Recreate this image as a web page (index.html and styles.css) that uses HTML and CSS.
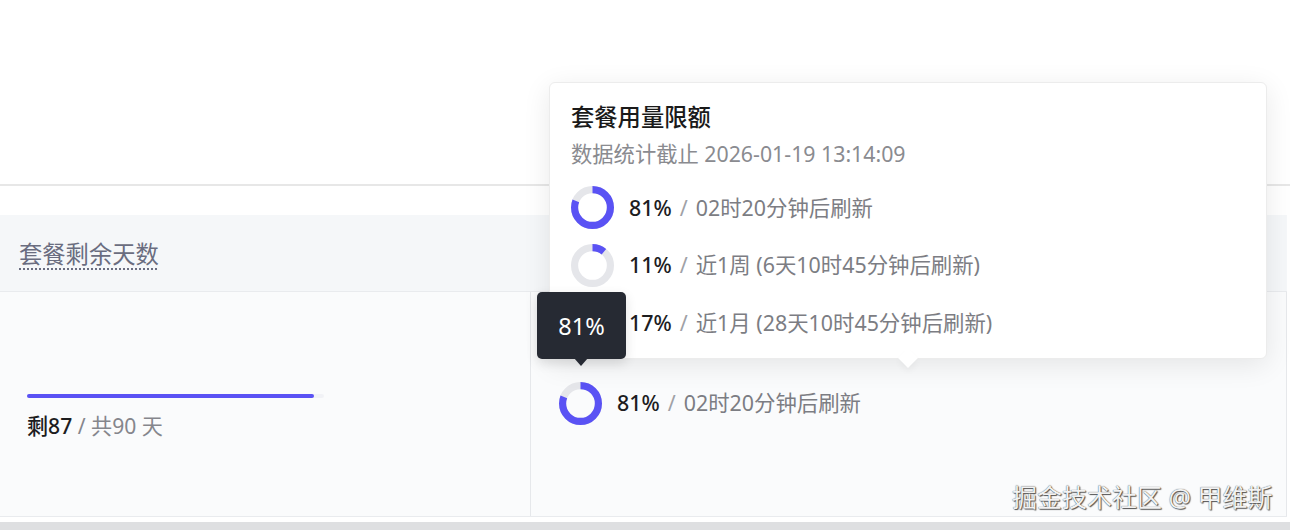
FILE: index.html
```html
<!DOCTYPE html>
<html lang="zh-CN">
<head>
<meta charset="utf-8">
<title>套餐用量</title>
<link rel="stylesheet" href="styles.css">
</head>
<body>
<div class="page">
  <div class="topbar"></div>
  <div class="spacer"></div>
  <div class="table">
    <div class="thead">
      <span class="th-label">套餐剩余天数</span>
    </div>
    <div class="tbody">
      <div class="cell cell-days">
        <div class="bar"><div class="bar-fill" style="width:96.7%"></div></div>
        <div class="days"><span class="strong">剩87</span><span class="muted"> / 共90 天</span></div>
      </div>
      <div class="cell cell-usage">
        <div class="usage-row">
          <svg class="ring" viewBox="0 0 42 42"><circle class="ring-track" cx="21" cy="21" r="17.5"/><circle class="ring-fill" cx="21" cy="21" r="17.5" pathLength="100" stroke-dasharray="81 100"/></svg>
          <span class="pct">81%</span><span class="sep">/</span><span class="desc">02时20分钟后刷新</span>
        </div>
      </div>
    </div>
  </div>
  <div class="strip-white"></div>
  <div class="strip-gray"></div>

  <div class="popover">
    <div class="pop-title">套餐用量限额</div>
    <div class="pop-sub">数据统计截止 2026-01-19 13:14:09</div>
    <div class="pop-rows">
      <div class="usage-row">
        <svg class="ring" viewBox="0 0 42 42"><circle class="ring-track" cx="21" cy="21" r="17.5"/><circle class="ring-fill" cx="21" cy="21" r="17.5" pathLength="100" stroke-dasharray="81 100"/></svg>
        <span class="pct">81%</span><span class="sep">/</span><span class="desc">02时20分钟后刷新</span>
      </div>
      <div class="usage-row">
        <svg class="ring" viewBox="0 0 42 42"><circle class="ring-track" cx="21" cy="21" r="17.5"/><circle class="ring-fill" cx="21" cy="21" r="17.5" pathLength="100" stroke-dasharray="11 100"/></svg>
        <span class="pct">11%</span><span class="sep">/</span><span class="desc">近1周 (6天10时45分钟后刷新)</span>
      </div>
      <div class="usage-row">
        <svg class="ring" viewBox="0 0 42 42"><circle class="ring-track" cx="21" cy="21" r="17.5"/><circle class="ring-fill" cx="21" cy="21" r="17.5" pathLength="100" stroke-dasharray="17 100"/></svg>
        <span class="pct">17%</span><span class="sep">/</span><span class="desc">近1月 (28天10时45分钟后刷新)</span>
      </div>
    </div>
    <div class="pop-arrow"></div>
  </div>

  <div class="tooltip">81%<div class="tip-arrow"></div></div>

  <div class="watermark">掘金技术社区 @ 甲维斯</div>
</div>
</body>
</html>
```
FILE: styles.css
```css
* { box-sizing: border-box; }
html, body { margin: 0; padding: 0; background: #ffffff; }
body {
  font-family: "Noto Sans", "Noto Sans CJK SC", sans-serif;
  width: 1290px;
  height: 530px;
  overflow: hidden;
}
.page { position: relative; width: 1290px; height: 530px; }

.topbar { height: 186px; border-bottom: 2px solid #e7e7e7; }
.spacer { height: 29px; }

.table { width: 1287px; }
.thead {
  height: 77px;
  background: #f5f7f9;
  border-bottom: 1px solid #e9ebee;
  display: flex;
  align-items: center;
  padding-left: 19px;
  padding-top: 2px;
}
.th-label {
  font-size: 23.3px;
  color: #6a6d80;
  line-height: 30px;
  text-decoration: underline dotted #6a6d80;
  text-underline-offset: 5px;
  text-decoration-thickness: 1.5px;
}
.tbody {
  height: 225px;
  display: grid;
  grid-template-columns: 531px 1fr;
  background: #fafbfc;
  border-bottom: 1px solid #e9ebee;
}
.cell { height: 100%; }
.cell-days {
  border-right: 1px solid #e6e8eb;
  padding: 102px 0 0 27px;
}
.bar {
  width: 297px;
  height: 4px;
  background: #f1f2f6;
  border-radius: 2px;
}
.bar-fill { height: 100%; background: #5a52f4; border-radius: 2px; }
.days { margin-top: 13px; font-size: 21.1px; line-height: 30px; }
.strong { color: #1d1d1f; font-weight: 500; }
.muted { color: #85868c; }

.cell-usage {
  border-right: 1px solid #e6e8eb;
  display: flex;
  align-items: center;
  padding-left: 28px;
  padding-bottom: 2px;
}

.usage-row {
  display: flex;
  align-items: center;
  font-size: 21.4px;
  line-height: 30px;
}
.ring { width: 43px; height: 43px; transform: rotate(-90deg); margin-right: 15px; flex: none; }
.ring-track { fill: none; stroke: #e5e6ea; stroke-width: 7; }
.ring-fill { fill: none; stroke: #5a52f4; stroke-width: 7; }
.pct { color: #1d1d1f; font-weight: 500; }
.sep { color: #a0a1a6; margin: 0 8px 0 8px; }
.desc { color: #7c7d83; }

.strip-white { height: 5px; }
.strip-gray { height: 8px; background: #dedfe1; }

.popover {
  position: absolute;
  left: 549px;
  top: 82px;
  width: 718px;
  height: 277px;
  background: #ffffff;
  border-radius: 6px;
  border: 1px solid #ececec;
  box-shadow: 0 6px 28px rgba(0, 0, 0, 0.09);
  padding: 19px 0 0 21px;
}
.pop-title { font-size: 23.3px; font-weight: 500; color: #1a1a1a; line-height: 30px; }
.pop-sub { margin-top: 7px; font-size: 21.3px; color: #8a8b90; line-height: 30px; }
.pop-rows { margin-top: 17px; display: flex; flex-direction: column; gap: 14.5px; }
.pop-arrow {
  position: absolute;
  left: 351px;
  bottom: -7px;
  width: 14px;
  height: 14px;
  background: #ffffff;
  transform: rotate(45deg);
  box-shadow: 3px 3px 6px rgba(0, 0, 0, 0.04);
}

.tooltip {
  position: absolute;
  left: 537px;
  top: 292px;
  width: 89px;
  height: 67px;
  background: #262a33;
  border-radius: 5px;
  color: #ffffff;
  font-size: 23.5px;
  display: flex;
  align-items: center;
  justify-content: center;
  box-shadow: 0 4px 12px rgba(0, 0, 0, 0.12);
}
.tip-arrow {
  position: absolute;
  left: 37px;
  bottom: -7px;
  width: 0;
  height: 0;
  border-left: 7px solid transparent;
  border-right: 7px solid transparent;
  border-top: 8px solid #262a33;
}

.watermark {
  position: absolute;
  left: 1012px;
  top: 480px;
  font-size: 25px;
  line-height: 34px;
  color: #f2f2f2;
  text-shadow: 0 0 1px #3a3a3a, 1px 1px 1px #555555;
  white-space: nowrap;
}
```
